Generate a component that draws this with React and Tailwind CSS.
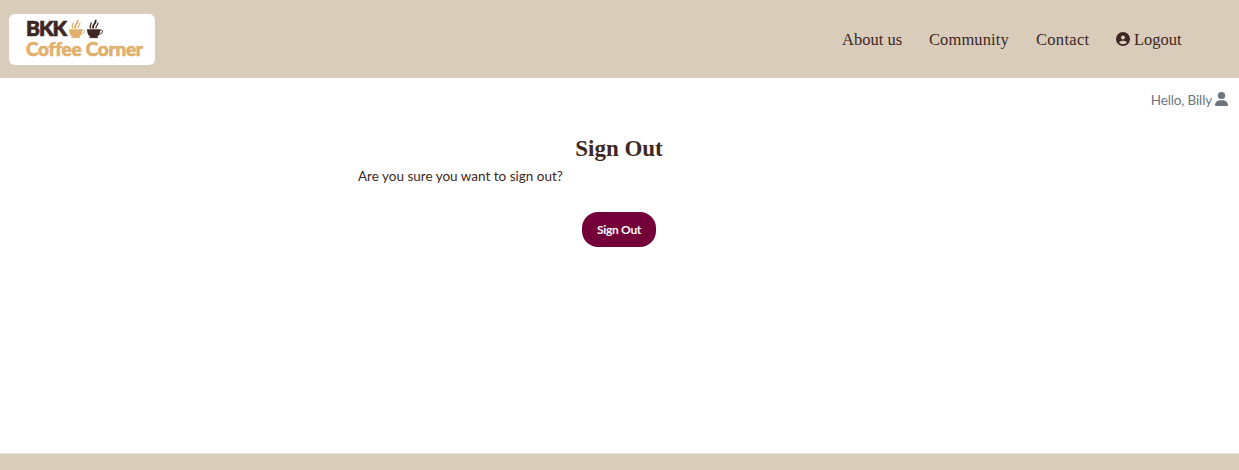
import { FaCircleUser, FaUser } from "react-icons/fa6";

function Cup({ className }) {
  return (
    <svg viewBox="0 0 18 20" className={className} fill="none" stroke="currentColor">
      <path d="M1 10.2 H14.2 C14.2 14.8 12.4 17.6 10 18.2 H5.4 C2.6 17.2 1 14.4 1 10.2 Z" fill="currentColor" stroke="none" />
      <path d="M14 11.4 C17.6 10.2 17.4 15 12.8 15.2" strokeWidth="1" />
      <path d="M3.4 18.6 H12.2" strokeWidth="1" />
      <path d="M5.2 9.4 C1.8 7 6.6 6 5 3.4" strokeWidth="1.2" />
      <path d="M7.6 9.4 C4.8 6 11.2 4.8 9.4 0.8" strokeWidth="1.8" />
      <path d="M10.2 9.4 C8.6 7 13 6.4 11.8 3.6" strokeWidth="1.2" />
    </svg>
  );
}

function Logo() {
  return (
    <a href="#" className="ml-[9px] flex h-[51px] w-[146px] flex-col rounded-md bg-white pt-1 font-['Lato',sans-serif] font-black">
      <span className="flex h-5 items-center pl-[17px] text-[#3e2723]">
        <span className="w-[42px] text-[21px] leading-5 tracking-[-1px] [-webkit-text-stroke:0.7px_#3e2723]">BKK</span>
        <Cup className="h-5 w-[18px] translate-y-px text-[#e0b06c]" />
        <Cup className="h-5 w-[18px] translate-y-px text-[#3e2723]" />
      </span>
      <span className="pt-px pl-[17px] text-[19px] leading-5 tracking-[-0.25px] whitespace-nowrap text-[#e0b06c] [-webkit-text-stroke:0.6px_#e0b06c]">Coffee Corner</span>
    </a>
  );
}

export default function App() {
  return (
    <div className="flex h-[470px] flex-col bg-white font-['Lato',sans-serif] text-[#3e2723]">
      <header className="flex h-[78px] shrink-0 items-center justify-between bg-[#d9ccbb]">
        <Logo />
        <nav className="mr-[57px] flex items-center gap-[26px] pt-px font-['Liberation_Serif',serif] text-[16.5px] leading-6 whitespace-nowrap">
          <a href="#" className="w-[61px]">About us</a>
          <a href="#" className="w-[81px] tracking-[0.1px]">Community</a>
          <a href="#" className="w-[54px] tracking-[0.3px]">Contact</a>
          <a href="#" className="flex w-[66px] items-center gap-1">
            <FaCircleUser className="-mt-px size-[14px] shrink-0" />
            Logout
          </a>
        </nav>
      </header>
      <div className="flex h-[43px] items-center justify-end gap-[3px] pr-[11px] text-[13.5px] tracking-[-0.15px] text-[#6c757d]">
        <span className="pt-px">Hello, Billy</span>
        <FaUser className="-mt-px h-[14px] w-[13px]" preserveAspectRatio="none" />
      </div>
      <main className="ml-[358px] flex w-[522px] grow flex-col items-center pt-[14px]">
        <h1 className="font-['Liberation_Serif',serif] text-[23px] leading-7 font-bold">Sign Out</h1>
        <p className="-mt-px self-start text-[13.5px] leading-7">Are you sure you want to sign out?</p>
        <button className="mt-[22px] h-[35px] w-[74px] rounded-[16px] bg-[#74003a] text-[12px] font-bold tracking-[-0.3px] text-white">Sign Out</button>
      </main>
      <footer className="h-[17px] shrink-0 border-t border-[#e8e0d6] bg-[#d9ccbb]" />
    </div>
  );
}
